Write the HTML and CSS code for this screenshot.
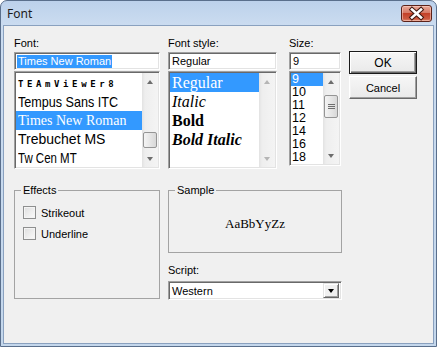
FILE: index.html
```html
<!DOCTYPE html>
<html lang="en">
<head>
  <meta charset="UTF-8" />
  <title>Font</title>
  <link rel="stylesheet" href="styles.css">
</head>
<body>
  <div class="window">
    <div class="titlebar">
      <span class="title">Font</span>
      <button class="close" type="button" aria-label="Close">
        <svg width="29" height="15" viewBox="0 0 29 15">
          <path d="M10 3.5 L19 11.5 M19 3.5 L10 11.5" stroke="#3f1710" stroke-width="4.6" stroke-linecap="square"/>
          <path d="M10 3.5 L19 11.5 M19 3.5 L10 11.5" stroke="#ffffff" stroke-width="2.6" stroke-linecap="square"/>
        </svg>
      </button>
    </div>

    <div class="client">
      <div class="top">
        <div class="col col-font">
          <div class="label">Font:</div>
          <div class="field"><span class="sel-text">Times New Roman</span></div>
          <div class="listbox">
            <div class="items">
              <div class="item f-tv">TEAmViEwEr8</div>
              <div class="item"><span class="f-tempus">Tempus Sans ITC</span></div>
              <div class="item f-times font-times selected">Times New Roman</div>
              <div class="item f-trebuchet">Trebuchet MS</div>
              <div class="item"><span class="f-twcen">Tw Cen MT</span></div>
            </div>
            <div class="vscroll">
              <div class="arrow"><span class="tri-up"></span></div>
              <div class="track"><div class="thumb thumb-font"></div></div>
              <div class="arrow"><span class="tri-down"></span></div>
            </div>
          </div>
        </div>

        <div class="col col-style">
          <div class="label">Font style:</div>
          <div class="field">Regular</div>
          <div class="listbox">
            <div class="items">
              <div class="item f-times selected">Regular</div>
              <div class="item f-times italic">Italic</div>
              <div class="item f-times bold">Bold</div>
              <div class="item f-times bold italic">Bold Italic</div>
            </div>
            <div class="vscroll disabled">
              <div class="arrow"><span class="tri-up"></span></div>
              <div class="track"></div>
              <div class="arrow"><span class="tri-down"></span></div>
            </div>
          </div>
        </div>

        <div class="col col-size">
          <div class="label">Size:</div>
          <div class="field">9</div>
          <div class="listbox">
            <div class="items size-items">
              <div class="item selected">9</div>
              <div class="item">10</div>
              <div class="item">11</div>
              <div class="item">12</div>
              <div class="item">14</div>
              <div class="item">16</div>
              <div class="item">18</div>
            </div>
            <div class="vscroll">
              <div class="arrow"><span class="tri-up"></span></div>
              <div class="track">
                <div class="thumb thumb-size">
                  <svg width="7" height="7" viewBox="0 0 7 7">
                    <path d="M0 1.5 H7 M0 3.5 H7 M0 5.5 H7" stroke="#6e6e6e" stroke-width="1"/>
                  </svg>
                </div>
              </div>
              <div class="arrow"><span class="tri-down"></span></div>
            </div>
          </div>
        </div>

        <div class="buttons">
          <button class="btn btn-default" type="button">OK</button>
          <button class="btn" type="button">Cancel</button>
        </div>
      </div>

      <div class="bottom">
        <fieldset class="group effects">
          <legend>Effects</legend>
          <div class="check first"><span class="box"></span>Strikeout</div>
          <div class="check"><span class="box"></span>Underline</div>
        </fieldset>

        <div class="col col-sample">
          <fieldset class="group sample">
            <legend>Sample</legend>
            <div class="sample-text">AaBbYyZz</div>
          </fieldset>
          <div class="label script-label">Script:</div>
          <div class="combo">
            <span class="combo-text">Western</span>
            <span class="drop"><span class="tri-drop"></span></span>
          </div>
        </div>
      </div>
    </div>
  </div>
</body>
</html>
```

FILE: styles.css
```css
* {
  box-sizing: border-box;
}

body {
  margin: 0;
  background: #ffffff;
  font-family: "Liberation Sans", Arial, sans-serif;
  font-size: 11px;
  color: #000;
}

/* window frame */
.window {
  width: 437px;
  height: 347px;
  border: 1px solid #5a6f8c;
  border-radius: 7px 7px 0 0;
  background: linear-gradient(#bcd1eb, #cbdcf0 24px, #c4d7ec);
  padding: 0 2px 2px;
  display: flex;
  flex-direction: column;
}

.titlebar {
  height: 24px;
  display: flex;
  align-items: center;
  justify-content: space-between;
  padding-left: 4px;
}

.title {
  font-family: "Noto Sans", "Liberation Sans", sans-serif;
  font-size: 12px;
  color: #1b1b1b;
}

.close {
  width: 31px;
  height: 17px;
  margin-right: 2px;
  padding: 0;
  border: 1px solid #5c2219;
  border-radius: 3px;
  background: linear-gradient(#e9a898, #d67a66 45%, #c44128 50%, #cd5a41 85%, #e0896f);
  box-shadow: inset 0 0 0 1px rgba(255, 220, 210, 0.5);
  display: flex;
  align-items: center;
  justify-content: center;
}

.client {
  flex: 1;
  border: 1px solid #8aa1bf;
  background: #f0f0f0;
  padding: 11px 0 0 10px;
}

/* top row: font / style / size / buttons */
.top {
  display: flex;
}

.col {
  display: flex;
  flex-direction: column;
}

.col-font {
  width: 146px;
}

.col-style {
  width: 109px;
  margin-left: 8px;
}

.col-size {
  width: 52px;
  margin-left: 12px;
}

.label {
  height: 13px;
  line-height: 13px;
  margin-bottom: 2px;
}

.field,
.listbox,
.combo {
  background: #fff;
  border: 1px solid;
  border-color: #a0a0a0 #ffffff #ffffff #a0a0a0;
  box-shadow: inset 1px 1px 0 #696969, inset -1px -1px 0 #e3e3e3;
}

.field {
  height: 18px;
  padding: 0 3px;
  display: flex;
  align-items: center;
  white-space: nowrap;
}

.sel-text {
  background: #3399ff;
  color: #fff;
  line-height: 13px;
  margin-left: -1px;
  padding: 0 1px;
}

.listbox {
  margin-top: 1px;
  height: 98px;
  padding: 1px;
  display: flex;
}

.col-size .listbox {
  height: 95px;
}

.items {
  flex: 1;
  overflow: hidden;
}

.item {
  height: 19px;
  line-height: 19px;
  padding-left: 2px;
  white-space: nowrap;
}

.item.selected {
  background: #3399ff;
  color: #fff;
}

.f-tv {
  font-family: "DejaVu Sans Mono", monospace;
  font-weight: bold;
  font-size: 9px;
  letter-spacing: 3.6px;
  line-height: 22px;
}

.f-tempus {
  display: inline-block;
  font-size: 15px;
  transform: scaleX(0.84);
  transform-origin: left center;
}

.f-times {
  font-family: "Liberation Serif", "Times New Roman", serif;
  font-size: 16px;
}

.font-times {
  font-size: 14px;
}

.f-trebuchet {
  font-size: 14px;
}

.f-twcen {
  display: inline-block;
  font-size: 14px;
  transform: scaleX(0.82);
  transform-origin: left center;
}

.italic {
  font-style: italic;
}

.bold {
  font-weight: bold;
}

.size-items .item {
  height: 13px;
  line-height: 13px;
  font-size: 12.5px;
  padding-left: 1px;
}

/* scrollbars */
.vscroll {
  width: 16px;
  display: flex;
  flex-direction: column;
  background: linear-gradient(90deg, #e2e2e2, #eeeeee 3px, #f4f4f4);
}

.arrow {
  height: 17px;
  display: flex;
  align-items: center;
  justify-content: center;
}

.tri-up,
.tri-down {
  width: 0;
  height: 0;
  border-left: 3.5px solid transparent;
  border-right: 3.5px solid transparent;
}

.tri-up {
  border-bottom: 4px solid #6d6d6d;
}

.tri-down {
  border-top: 4px solid #6d6d6d;
}

.disabled .tri-up {
  border-bottom-color: #b5b5b5;
}

.disabled .tri-down {
  border-top-color: #b5b5b5;
}

.track {
  flex: 1;
}

.thumb {
  margin: 0 1px;
  border: 1px solid #959595;
  border-radius: 2px;
  background: linear-gradient(90deg, #f4f4f4, #e6e6e6 50%, #d8d8d8);
  display: flex;
  align-items: center;
  justify-content: center;
}

.thumb-font {
  margin-top: 42px;
  height: 16px;
}

.thumb-size {
  margin-top: 5px;
  height: 23px;
}

/* buttons */
.buttons {
  width: 68px;
  margin-left: 8px;
  padding-top: 14px;
  display: flex;
  flex-direction: column;
  gap: 2px;
}

.btn {
  height: 23px;
  padding: 0;
  font-family: "Liberation Sans", Arial, sans-serif;
  font-size: 11px;
  color: #000;
  background: linear-gradient(#f6f6f6, #e9e9e9);
  border: 1px solid;
  border-color: #ffffff #696969 #696969 #ffffff;
  box-shadow: inset -1px -1px 0 #a0a0a0, inset 1px 1px 0 #f4f4f4;
}

.btn-default {
  border-color: #1a1a1a;
  box-shadow: inset 1px 1px 0 #ffffff, inset -1px -1px 0 #696969, inset -2px -2px 0 #a0a0a0;
  font-size: 12px;
}

/* bottom row */
.bottom {
  display: flex;
  margin-top: 15px;
}

.group {
  margin: 0;
  padding: 0 6px;
  border: 1px solid #a3a3a3;
  min-width: 0;
}

.group legend {
  padding: 0 2px;
  line-height: 13px;
}

.effects {
  width: 146px;
  height: 115px;
}

.check {
  height: 17px;
  margin: 4px 0 0 2px;
  display: flex;
  align-items: center;
  gap: 5px;
}

.check.first {
  margin-top: 7px;
}

.box {
  width: 13px;
  height: 13px;
  border: 1px solid #8e8f8f;
  background: linear-gradient(135deg, #dedede, #fbfbfb);
  box-shadow: inset 0 0 0 1px #f4f4f4;
}

.col-sample {
  width: 174px;
  margin-left: 8px;
}

.sample {
  height: 69px;
}

.sample-text {
  margin-top: 19px;
  line-height: 15px;
  text-align: center;
  font-family: "Liberation Serif", "Times New Roman", serif;
  font-size: 13px;
}

.script-label {
  margin-top: 11px;
  margin-bottom: 4px;
}

.combo {
  height: 19px;
  padding: 2px 2px 2px 3px;
  display: flex;
  align-items: center;
  justify-content: space-between;
}

.drop {
  width: 16px;
  height: 15px;
  background: #f0f0f0;
  border: 1px solid;
  border-color: #e3e3e3 #696969 #696969 #e3e3e3;
  box-shadow: inset 1px 1px 0 #ffffff, inset -1px -1px 0 #a0a0a0;
  display: flex;
  align-items: center;
  justify-content: center;
}

.tri-drop {
  width: 0;
  height: 0;
  border-left: 3.5px solid transparent;
  border-right: 3.5px solid transparent;
  border-top: 4px solid #000;
}
```
